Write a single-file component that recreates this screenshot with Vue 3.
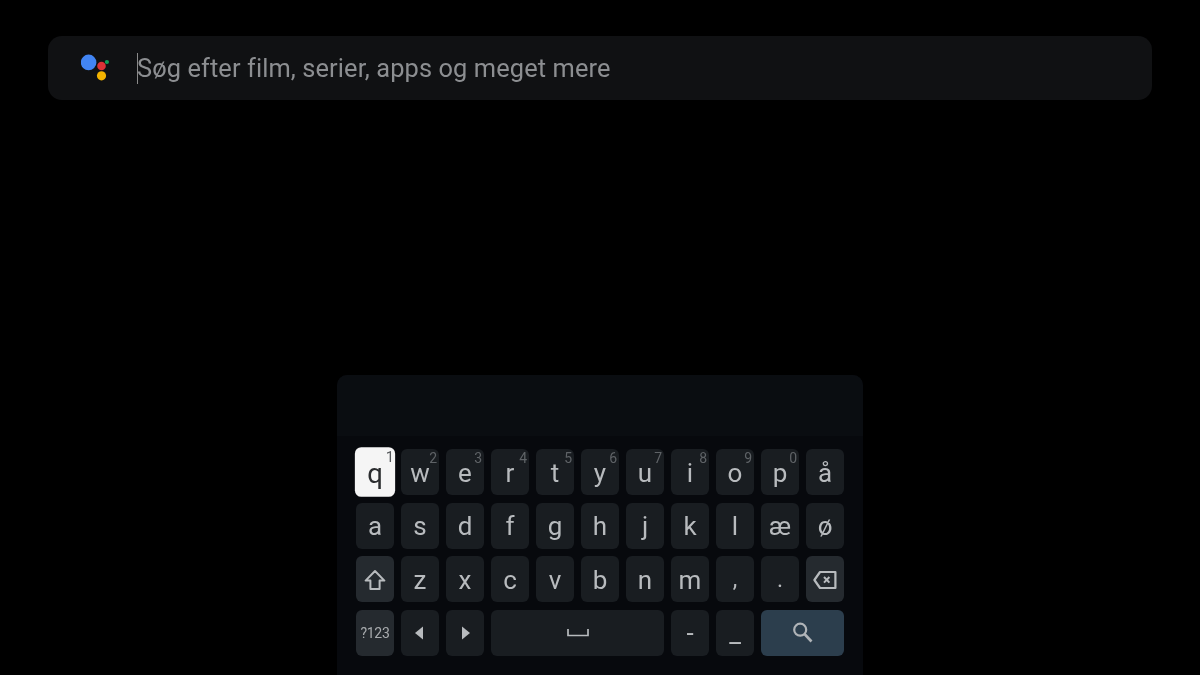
<script setup>
const rows = [
  [['q','1'],['w','2'],['e','3'],['r','4'],['t','5'],['y','6'],['u','7'],['i','8'],['o','9'],['p','0'],['å','']],
  [['a'],['s'],['d'],['f'],['g'],['h'],['j'],['k'],['l'],['æ'],['ø']],
]
const row3 = ['z','x','c','v','b','n','m']
</script>

<template>
  <div class="page">
    <div class="search">
      <svg class="assistant" width="30" height="30" viewBox="0 0 30 30">
        <circle cx="7.6" cy="9.4" r="7.8" fill="#4285f4"/>
        <circle cx="20.5" cy="13" r="4.3" fill="#db3236"/>
        <circle cx="20.5" cy="22.8" r="4.6" fill="#f4b400"/>
        <circle cx="25.9" cy="9" r="2.1" fill="#0f9d58"/>
      </svg>
      <div class="field"><span class="caret"></span><span class="placeholder">Søg efter film, serier, apps og meget mere</span></div>
    </div>

    <div class="panel">
      <div class="band"></div>
      <div class="keys">
        <template v-for="(row, r) in rows" :key="r">
          <div v-for="k in row" :key="k[0]" class="key" :class="{ focused: k[0] === 'q' }">
            {{ k[0] }}<span v-if="k[1]" class="hint">{{ k[1] }}</span>
          </div>
        </template>

        <div class="key alt">
          <svg width="22" height="22" viewBox="0 0 22 22" fill="none" stroke="#b8bbbe" stroke-width="2" stroke-linejoin="round"><path d="M11 2 20.4 11.6H15.6V20H6.4V11.6H1.6Z"/></svg>
        </div>
        <div v-for="c in row3" :key="c" class="key">{{ c }}</div>
        <div class="key punct">,</div>
        <div class="key punct">.</div>
        <div class="key alt">
          <svg width="24" height="20" viewBox="0 0 24 20" fill="none" stroke="#b8bbbe" stroke-width="2.2" stroke-linejoin="round"><path d="M7 2H22.4V18H7L1.4 10Z"/><path d="M11 7 16.4 12.6M16.4 7 11 12.6" stroke-width="2"/></svg>
        </div>

        <div class="key alt sym">?123</div>
        <div class="key">
          <svg class="nudge-left" width="10" height="14" viewBox="0 0 10 14"><path d="M9 0.5V13.5L1 7Z" fill="#b8bbbe"/></svg>
        </div>
        <div class="key">
          <svg class="nudge-right" width="10" height="14" viewBox="0 0 10 14"><path d="M1 0.5V13.5L9 7Z" fill="#b8bbbe"/></svg>
        </div>
        <div class="key space">
          <svg width="22" height="8" viewBox="0 0 22 8" fill="none" stroke="#b8bbbe" stroke-width="1.7"><path d="M1 0V6.5H21V0"/></svg>
        </div>
        <div class="key">-</div>
        <div class="key">_</div>
        <div class="key go">
          <svg width="22" height="22" viewBox="0 0 22 22" fill="none" stroke="#b0b4b8" stroke-width="2.2"><circle cx="8.2" cy="7.7" r="6"/><path d="M12.5 12 19.5 19.5" stroke-width="2.6"/></svg>
        </div>
      </div>
    </div>
  </div>
</template>

<style scoped>
.page {
  height: 675px;
  display: flex;
  flex-direction: column;
  align-items: center;
  background: #000;
  overflow: hidden;
  font-family: Roboto, "Liberation Sans", sans-serif;
  filter: blur(0.35px);
}
.search {
  width: 1104px;
  height: 64px;
  margin-top: 36px;
  box-sizing: border-box;
  padding-left: 33px;
  display: flex;
  align-items: center;
  gap: 26px;
  background: #101113;
  border-radius: 14px;
}
.assistant { flex: none; }
.field { display: flex; align-items: center; }
.caret { width: 1px; height: 31px; background: #8a8a8a; margin-right: -1px; }
.placeholder { font-size: 25.4px; color: #8c8e91; letter-spacing: 0.1px; white-space: nowrap; }
.panel {
  margin-top: auto;
  width: 526px;
  height: 300px;
  background: #07090d;
  border-radius: 10px 10px 0 0;
  display: flex;
  flex-direction: column;
}
.band { height: 61px; background: #0a0d11; border-radius: 10px 10px 0 0; }
.keys {
  margin: 13px 19px 0;
  display: grid;
  grid-template-columns: repeat(11, 38px);
  grid-auto-rows: 46px;
  column-gap: 7px;
  row-gap: 7.67px;
}
.key {
  position: relative;
  box-sizing: border-box;
  padding-top: 1px;
  display: flex;
  align-items: center;
  justify-content: center;
  background: #191d21;
  border-radius: 6px;
  color: #b8bbbe;
  font-size: 26px;
  line-height: 1;
}
.alt { background: #252a2f; }
.sym { font-size: 14px; letter-spacing: -0.3px; color: #a8abae; }
.punct { font-size: 23px; }
.space { grid-column: span 4; }
.go { grid-column: span 2; background: #2c3e4d; }
.nudge-left { margin-right: 2px; }
.nudge-right { margin-left: 2px; }
.hint {
  position: absolute;
  top: 1px;
  right: 2px;
  font-size: 14px;
  line-height: 16px;
  color: #5f6367;
}
.focused {
  background: #f5f5f5;
  color: #2a2c2e;
  transform: scale(1.06, 1.08);
}
.focused .hint { color: #55585b; right: 1px; }
</style>

<style>
html, body { margin: 0; background: #000; }
</style>
